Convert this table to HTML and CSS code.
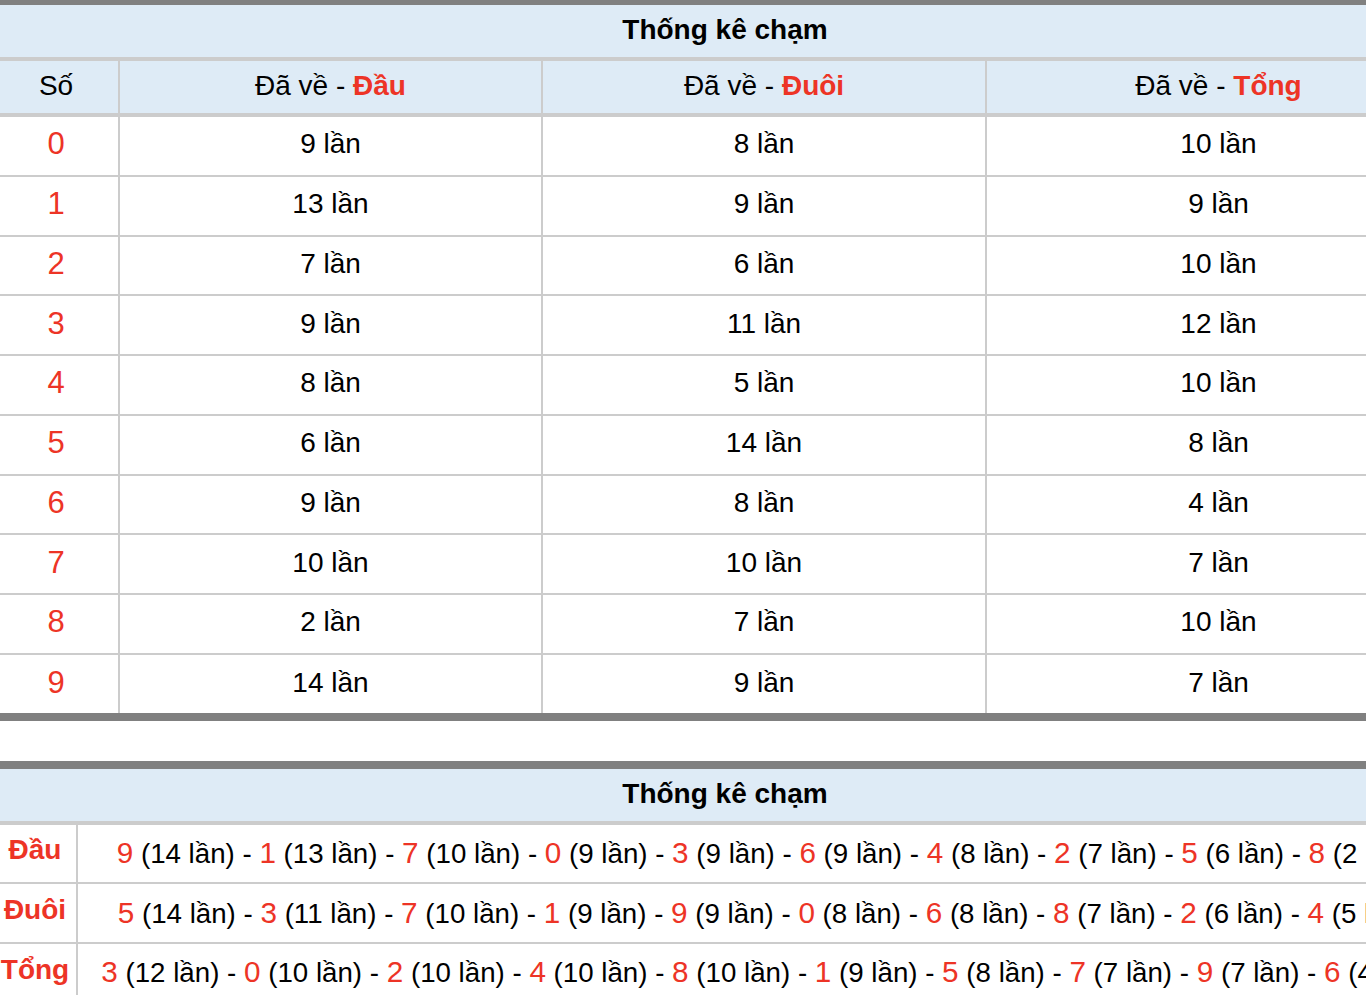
FILE: index.html
```html
<!DOCTYPE html>
<html lang="vi">
<head>
<meta charset="utf-8">
<title>Thống kê chạm</title>
<link rel="stylesheet" href="styles.css">
</head>
<body>
<div class="page">
  <section class="tbl tbl-main tbl-first">
    <div class="cell title"><span>Thống kê chạm</span></div>
    <div class="cell head first"><span>Số</span></div>
    <div class="cell head"><span>Đã về - <b class="red">Đầu</b></span></div>
    <div class="cell head"><span>Đã về - <b class="red">Đuôi</b></span></div>
    <div class="cell head last"><span>Đã về - <b class="red">Tổng</b></span></div>

    <div class="cell num first"><span>0</span></div><div class="cell"><span>9 lần</span></div><div class="cell"><span>8 lần</span></div><div class="cell last"><span>10 lần</span></div>
    <div class="cell num first"><span>1</span></div><div class="cell"><span>13 lần</span></div><div class="cell"><span>9 lần</span></div><div class="cell last"><span>9 lần</span></div>
    <div class="cell num first"><span>2</span></div><div class="cell"><span>7 lần</span></div><div class="cell"><span>6 lần</span></div><div class="cell last"><span>10 lần</span></div>
    <div class="cell num first"><span>3</span></div><div class="cell"><span>9 lần</span></div><div class="cell"><span>11 lần</span></div><div class="cell last"><span>12 lần</span></div>
    <div class="cell num first"><span>4</span></div><div class="cell"><span>8 lần</span></div><div class="cell"><span>5 lần</span></div><div class="cell last"><span>10 lần</span></div>
    <div class="cell num first"><span>5</span></div><div class="cell"><span>6 lần</span></div><div class="cell"><span>14 lần</span></div><div class="cell last"><span>8 lần</span></div>
    <div class="cell num first"><span>6</span></div><div class="cell"><span>9 lần</span></div><div class="cell"><span>8 lần</span></div><div class="cell last"><span>4 lần</span></div>
    <div class="cell num first"><span>7</span></div><div class="cell"><span>10 lần</span></div><div class="cell"><span>10 lần</span></div><div class="cell last"><span>7 lần</span></div>
    <div class="cell num first"><span>8</span></div><div class="cell"><span>2 lần</span></div><div class="cell"><span>7 lần</span></div><div class="cell last"><span>10 lần</span></div>
    <div class="cell num first end"><span>9</span></div><div class="cell end"><span>14 lần</span></div><div class="cell end"><span>9 lần</span></div><div class="cell last end"><span>7 lần</span></div>
  </section>

  <section class="tbl tbl-sum">
    <div class="cell title"><span>Thống kê chạm</span></div>

    <div class="cell label"><span>Đầu</span></div>
    <div class="cell line last"><span><span class="d">9</span> (14 lần) - <span class="d">1</span> (13 lần) - <span class="d">7</span> (10 lần) - <span class="d">0</span> (9 lần) - <span class="d">3</span> (9 lần) - <span class="d">6</span> (9 lần) - <span class="d">4</span> (8 lần) - <span class="d">2</span> (7 lần) - <span class="d">5</span> (6 lần) - <span class="d">8</span> (2 lần)</span></div>

    <div class="cell label"><span>Đuôi</span></div>
    <div class="cell line last"><span><span class="d">5</span> (14 lần) - <span class="d">3</span> (11 lần) - <span class="d">7</span> (10 lần) - <span class="d">1</span> (9 lần) - <span class="d">9</span> (9 lần) - <span class="d">0</span> (8 lần) - <span class="d">6</span> (8 lần) - <span class="d">8</span> (7 lần) - <span class="d">2</span> (6 lần) - <span class="d">4</span> (5 lần)</span></div>

    <div class="cell label"><span>Tổng</span></div>
    <div class="cell line last"><span><span class="d">3</span> (12 lần) - <span class="d">0</span> (10 lần) - <span class="d">2</span> (10 lần) - <span class="d">4</span> (10 lần) - <span class="d">8</span> (10 lần) - <span class="d">1</span> (9 lần) - <span class="d">5</span> (8 lần) - <span class="d">7</span> (7 lần) - <span class="d">9</span> (7 lần) - <span class="d">6</span> (4 lần)</span></div>
  </section>
</div>
</body>
</html>
```

FILE: styles.css
```css
html, body {
  margin: 0;
  padding: 0;
  overflow: hidden;
  background: #fff;
}

.page {
  width: 1450px;
  font-family: "Liberation Sans", Arial, Helvetica, sans-serif;
  font-size: 28px;
  color: #000;
}

.red { color: #ed3426; font-weight: bold; }

.tbl {
  display: grid;
  border-top: 8px solid #808080;
  border-bottom: 8px solid #808080;
  box-sizing: border-box;
}

.tbl-first { border-top-width: 5px; }

.tbl-main {
  grid-template-columns: 120px 423px 444px 463px;
}

.tbl-sum {
  margin-top: 40px;
  grid-template-columns: 78px 1372px;
}

.cell {
  display: flex;
  align-items: center;
  justify-content: center;
  box-sizing: border-box;
  height: 59.75px;
  padding-bottom: 3px;
  border-right: 2px solid #cccccc;
  border-bottom: 2px solid #cccccc;
  white-space: nowrap;
  line-height: 32px;
}

.cell.last { border-right: none; }
.cell.end { border-bottom: none; height: 57.75px; padding-bottom: 1px; }
.cell.first { padding-right: 6px; }

.title {
  grid-column: 1 / -1;
  height: 56px;
  padding-bottom: 2px;
  border-right: none;
  border-bottom: 4px solid #cccccc;
  background: #deebf6;
  font-weight: bold;
}

.head {
  height: 56px;
  padding-bottom: 2px;
  border-bottom: 4px solid #cccccc;
  background: #deebf6;
}

.num { color: #ed3426; font-size: 31px; }

.label {
  color: #ed3426;
  font-weight: bold;
  padding-right: 6px;
  padding-bottom: 6px;
}

.line {
  padding-bottom: 0;
  font-size: 27.7px;
}

.line .d {
  color: #ed3426;
  font-size: 29.7px;
}
```
